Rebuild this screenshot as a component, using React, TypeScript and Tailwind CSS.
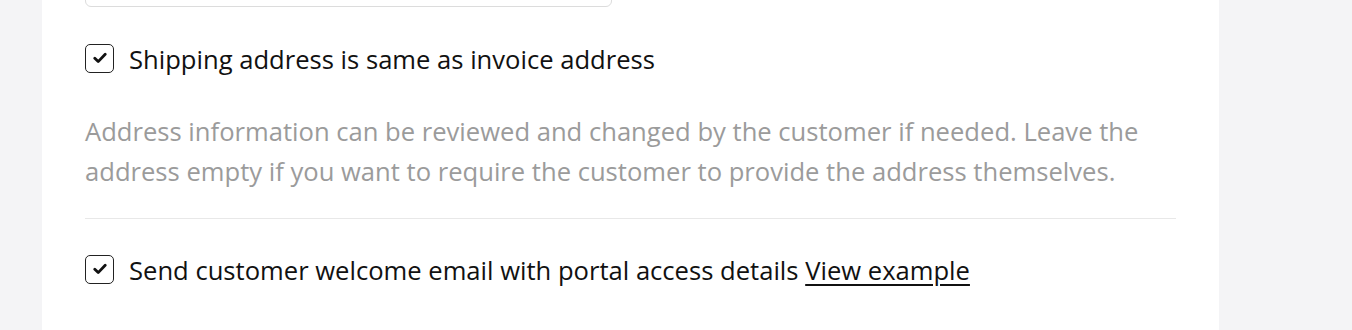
import React from "react";

function Check() {
  return (
    <div className="flex h-[29px] w-[29px] shrink-0 items-center justify-center rounded-[5px] border border-[#222] bg-white">
      <svg width="14" height="12" viewBox="0 0 14 12">
        <path d="M1.8 6.2 L5.2 9.6 L12.2 2.2" fill="none" stroke="#111" strokeWidth="2.8" strokeLinecap="round" strokeLinejoin="round" />
      </svg>
    </div>
  );
}

export default function App() {
  return (
    <div className="flex h-[330px] w-[1352px] overflow-hidden bg-[#f4f4f6]" style={{ fontFamily: "'Open Sans', sans-serif" }}>
      <div className="ml-[42px] flex h-full w-[1177px] flex-col bg-white px-[43px]">
        <div className="mt-[-41px] h-[48px] w-[527px] rounded-[6px] border border-[#dcdcdc] bg-white" />
        <div className="mt-[34px] flex items-center gap-[15px]">
          <Check />
          <span className="whitespace-nowrap pt-[4px] text-[25.6px] leading-[30px] text-[#111]">Shipping address is same as invoice address</span>
        </div>
        <p className="mt-[37px] whitespace-nowrap text-[25.6px] leading-[40px] text-[#9b9b9b]">
          Address information can be reviewed and changed by the customer if needed. Leave the
          <br />
          address empty if you want to require the customer to provide the address themselves.
        </p>
        <div className="mt-[26px] h-px w-full bg-[#e8e8e8]" />
        <div className="mt-[33px] flex items-center gap-[15px]">
          <Check />
          <span className="whitespace-nowrap pt-[4px] text-[25.6px] leading-[30px] text-[#111]">
            Send customer welcome email with portal access details{" "}
            <a className="underline underline-offset-[4px]" href="#">View example</a>
          </span>
        </div>
      </div>
    </div>
  );
}
